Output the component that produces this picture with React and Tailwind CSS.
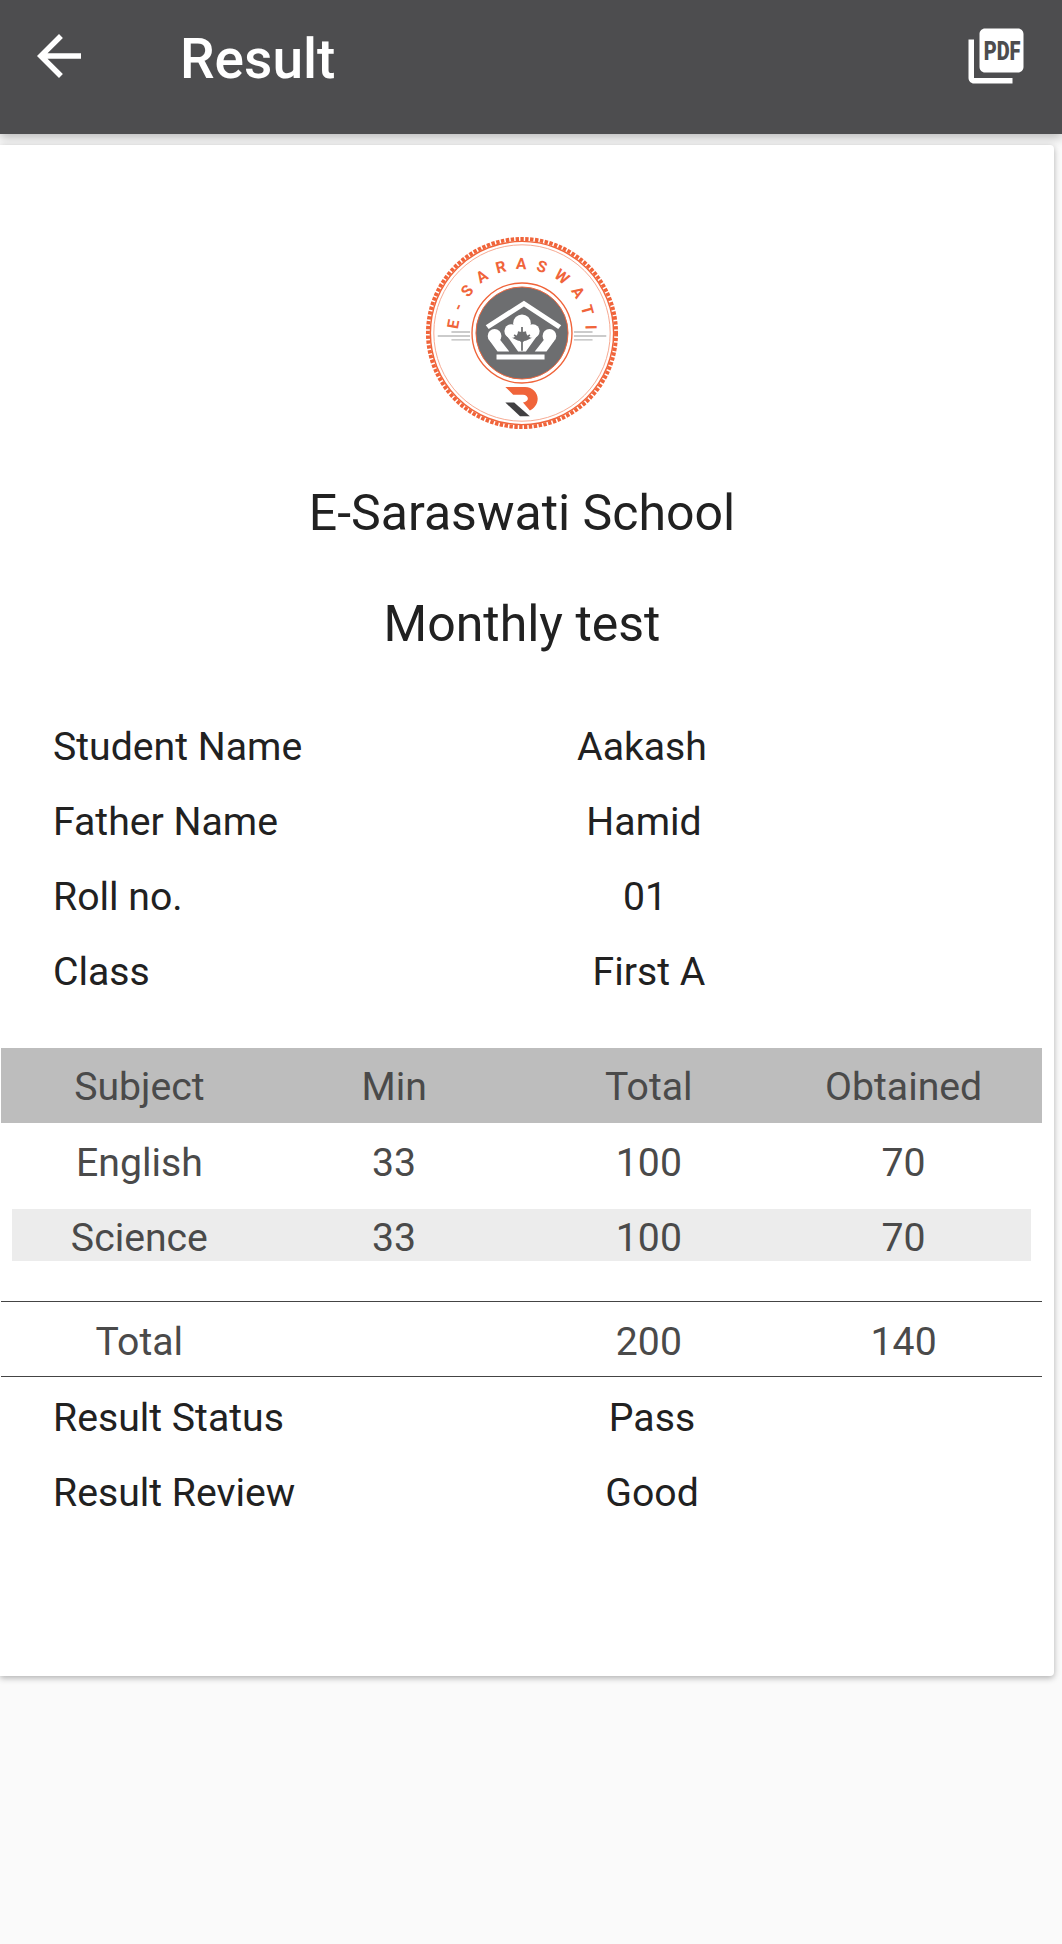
const infoTop = [
  { label: 'Student Name', value: 'Aakash', shift: 'pr-[14px]' },
  { label: 'Father Name', value: 'Hamid', shift: 'pr-[10px]' },
  { label: 'Roll no.', value: '01', shift: 'pr-[8px]' },
  { label: 'Class', value: 'First A', shift: 'pl-0' },
];

const infoBottom = [
  { label: 'Result Status', value: 'Pass', shift: 'pl-[6px]' },
  { label: 'Result Review', value: 'Good', shift: 'pl-[6px]' },
];

function PdfIcon() {
  return (
    <svg viewBox="0 0 24 24" className="h-[66px] w-[66px] overflow-visible" fill="none">
      <path fill="#fff" d="M20 2H8c-1.100 0-2 .9-2 2v12c0 1.100.9 2 2 2h12c1.100 0 2-.9 2-2V4c0-1.100-.9-2-2-2zM4 6H2v14c0 1.100.9 2 2 2h14v-2H4V6z" />
      <text
        x="7.500"
        y="13.300"
        fill="#4d4d4f"
        fontFamily="Roboto, sans-serif"
        fontWeight="900"
        fontSize="9.300"
        textLength="13.400"
        lengthAdjust="spacingAndGlyphs"
      >
        PDF
      </text>
    </svg>
  );
}

function Logo() {
  return (
    <svg viewBox="0 0 200 200" className="h-[196px] w-[196px]">
      <defs>
        {/* full circle from the bottom, so 50% sits on top */}
        <path id="arc" d="M 100 165 A 65 65 0 0 1 100 35 A 65 65 0 0 1 100 165" />
      </defs>
      {/* stamp edge */}
      <circle cx="100" cy="100" r="96" fill="none" stroke="#f0643a" strokeWidth="4" strokeDasharray="3.500 1.500" />
      <circle cx="100" cy="100" r="93.500" fill="#fff" stroke="#f0643a" strokeWidth="1.500" />
      <circle cx="100" cy="100" r="90" fill="none" stroke="#f6a78e" strokeWidth="1" />
      <text fill="#f0643a" fontFamily="Roboto, sans-serif" fontWeight="700" fontSize="16" letterSpacing="9.200">
        <textPath href="#arc" startOffset="51.100%" textAnchor="middle">E-SARASWATI</textPath>
      </text>
      <g stroke="#bbb" strokeWidth="1.400">
        <path d="M14 103h33M28 99h19M28 107h19M153 103h33M153 99h19M153 107h19" />
      </g>
      <circle cx="100" cy="100" r="51" fill="#fff" stroke="#f0643a" strokeWidth="1.400" />
      <circle cx="100" cy="100" r="47" fill="#6d6e70" stroke="#f0643a" strokeWidth="1" />
      {/* crown and roof */}
      <g fill="#fff">
        <path d="M102 67l38 25-3 4-35-23-36 23-3-4z" />
        <circle cx="72" cy="103" r="7" />
        <circle cx="128" cy="103" r="7" />
        <path d="M67 108l8 11h12l-10-13zM133 108l-8 11h-12l10-13z" />
        <circle cx="100" cy="90" r="9" />
        <circle cx="89" cy="98" r="7" />
        <circle cx="111" cy="98" r="7" />
        <path d="M84 102l12 17h8l12-17-12 6h-8z" />
        <path d="M74 122h49v5H74z" />
      </g>
      <path d="M100 94v24M92 102l8 7 8-7" fill="none" stroke="#6d6e70" strokeWidth="1.800" />
      {/* R mark */}
      <path fill="#f0643a" d="M83 155h20c8 0 13 6 13 12 0 6-4 10-8 12l-7-8c3-1 5-2 5-4 0-2-2-4-5-4H91z" />
      <path fill="#414042" d="M83 171h9l16 14H98z" />
    </svg>
  );
}

function InfoRow({ label, value, shift }) {
  return (
    <div className="flex h-[75px] items-center pl-[53px] text-[39.200px] text-[#212121]">
      <div className="w-[430px]">{label}</div>
      <div className={`w-[332px] text-center ${shift}`}>{value}</div>
    </div>
  );
}

function MarkRow({ cells, className = '' }) {
  return (
    <div className={`grid grid-cols-4 items-center text-center text-[39.200px] text-[#4a4a4a] ${className}`}>
      {cells.map((cell, i) => (
        <div key={i}>{cell}</div>
      ))}
    </div>
  );
}

export default function App() {
  return (
    <div className="min-h-[1944px] bg-[#fafafa] font-['Roboto',sans-serif]">
      {/* Toolbar */}
      <header className="flex h-[134px] items-start justify-between bg-[#4d4d4f] pl-[26px] pr-[33px] pt-[23px] shadow-[0_4px_10px_rgba(0,0,0,0.25)]">
        <div className="flex items-start">
          <svg viewBox="0 0 24 24" className="h-[66px] w-[66px]" fill="#fff">
            <path d="M20 11H7.830l5.590-5.590L12 4l-8 8 8 8 1.410-1.410L7.830 13H20v-2z" />
          </svg>
          <h1 className="ml-[88px] mt-[1px] text-[55px] font-medium leading-[70px] text-white">Result</h1>
        </div>
        <PdfIcon />
      </header>

      {/* Result card */}
      <main className="mt-[11px] h-[1531px] w-[1054px] rounded-r bg-white shadow-[0_2px_6px_rgba(0,0,0,0.3)]">
        <div className="pr-[10px]">
          <div className="flex justify-center pt-[90px]">
            <Logo />
          </div>
          <h2 className="mt-[50px] text-center text-[50px] leading-[64px] text-[#212121]">E-Saraswati School</h2>
          <h3 className="mt-[47px] text-center text-[50px] leading-[64px] text-[#212121]">Monthly test</h3>
        </div>

        <div className="mt-[54px]">
          {infoTop.map((row) => (
            <InfoRow key={row.label} {...row} />
          ))}
        </div>

        <div className="mt-[38px] ml-px w-[1041px]">
          <MarkRow cells={['Subject', 'Min', 'Total', 'Obtained']} className="h-[75px] bg-[#bdbdbd] px-[11px] pt-[4px]" />
          <div className="h-[86px] px-[11px] pt-[11px]">
            <MarkRow cells={['English', '33', '100', '70']} />
          </div>
          <MarkRow cells={['Science', '33', '100', '70']} className="mx-[11px] h-[52px] bg-[#ececec] pb-[2px]" />
          <div className="mt-[40px] border-y border-[#444] px-[11px]">
            <MarkRow cells={['Total', '', '200', '140']} className="h-[74px] pt-[6px]" />
          </div>
        </div>

        <div className="mt-[4px]">
          {infoBottom.map((row) => (
            <InfoRow key={row.label} {...row} />
          ))}
        </div>
      </main>
    </div>
  );
}
